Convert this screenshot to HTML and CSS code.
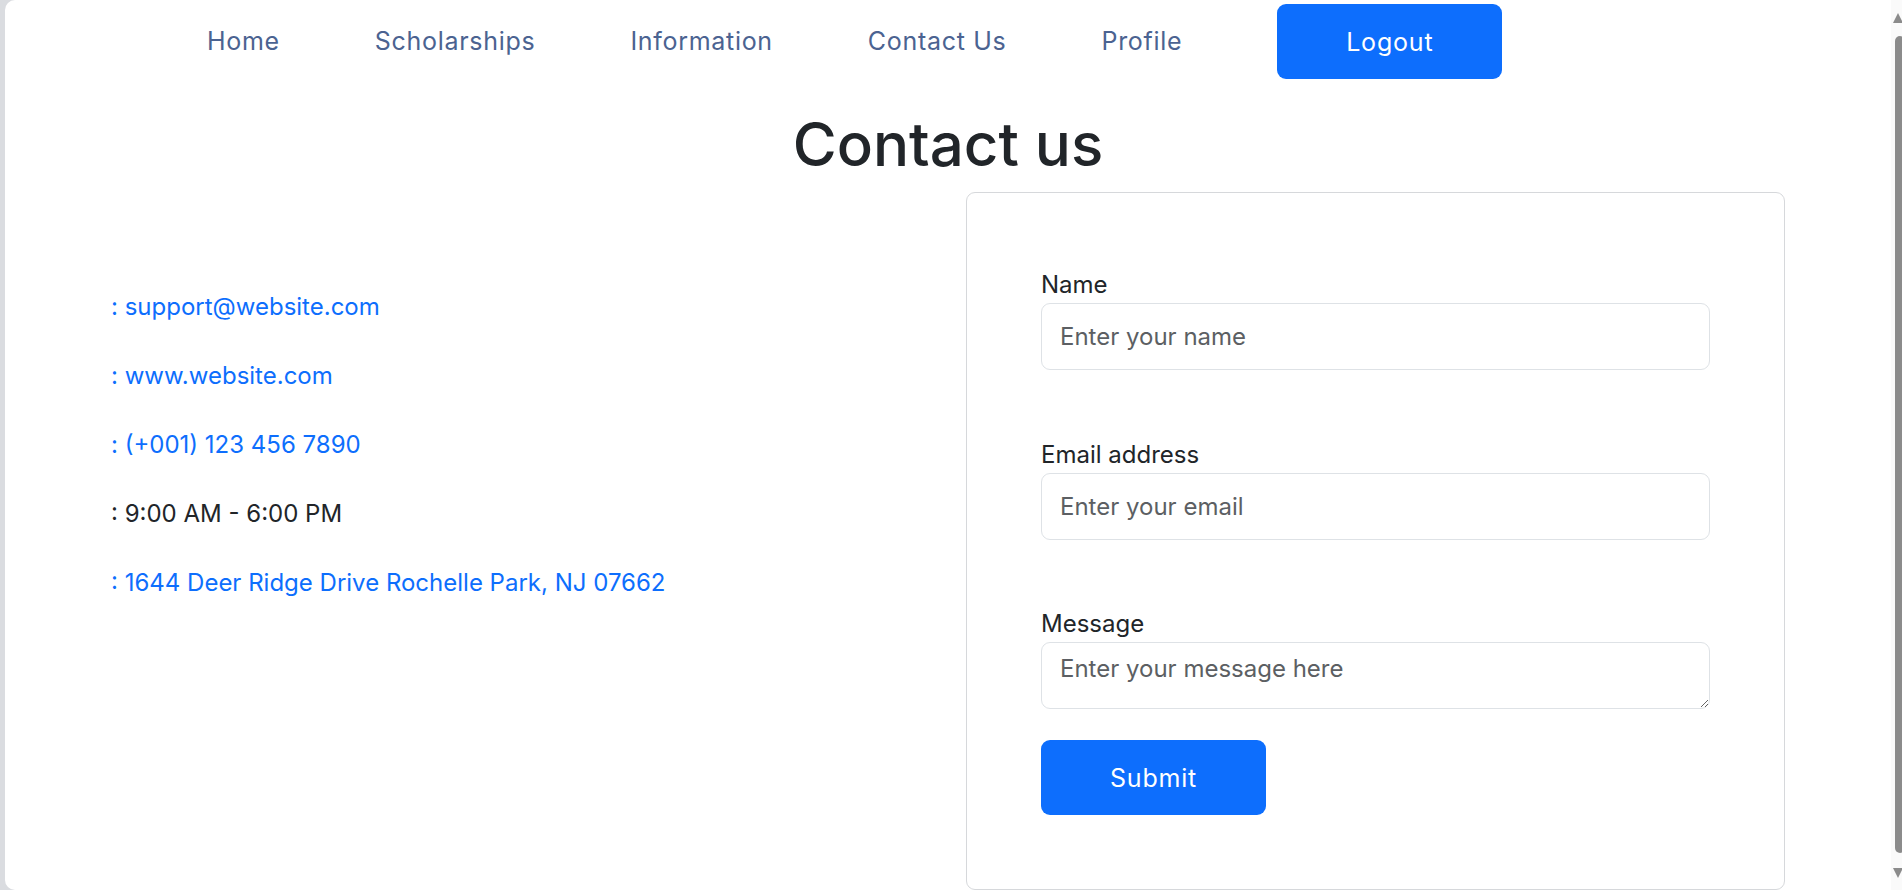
FILE: index.html
```html
<!DOCTYPE html>
<html lang="en">
<head>
<meta charset="utf-8">
<title>Contact us</title>
<link rel="stylesheet" href="styles.css">
</head>
<body>
<div class="window">
  <div class="page">
    <nav class="topnav">
      <ul class="nav-links">
        <li><a href="#">Home</a></li>
        <li><a href="#">Scholarships</a></li>
        <li><a href="#">Information</a></li>
        <li><a href="#">Contact Us</a></li>
        <li><a href="#">Profile</a></li>
      </ul>
      <a class="btn btn-logout" href="#">Logout</a>
    </nav>

    <h1 class="title">Contact us</h1>

    <div class="container">
      <div class="col info">
        <p><a href="#">: support@website.com</a></p>
        <p><a href="#">: www.website.com</a></p>
        <p><a href="#">: (+001) 123 456 7890</a></p>
        <p class="plain">: 9:00 AM - 6:00 PM</p>
        <p><a href="#">: 1644 Deer Ridge Drive Rochelle Park, NJ 07662</a></p>
      </div>
      <div class="col">
        <div class="card">
          <form class="form">
            <div class="field">
              <label for="name">Name</label>
              <input id="name" type="text" placeholder="Enter your name">
            </div>
            <div class="field">
              <label for="email">Email address</label>
              <input id="email" type="email" placeholder="Enter your email">
            </div>
            <div class="field field-last">
              <label for="msg">Message</label>
              <textarea id="msg" rows="1" placeholder="Enter your message here"></textarea>
            </div>
            <button type="button" class="btn btn-submit">Submit</button>
          </form>
        </div>
      </div>
    </div>
  </div>
  <div class="scrollbar">
    <span class="arrow arrow-up"></span>
    <span class="thumb"></span>
    <span class="arrow arrow-down"></span>
  </div>
</div>
</body>
</html>
```

FILE: styles.css
```css
* { box-sizing: border-box; }

html, body {
  margin: 0;
  padding: 0;
  height: 890px;
  overflow: hidden;
}

body {
  font-family: Inter, "Noto Sans", "Liberation Sans", sans-serif;
  font-size: 24px;
  line-height: 36px;
  color: #212529;
  background: #dadce0;
}

.window {
  display: flex;
  height: 890px;
  padding-left: 5px;
  background: #dadce0;
}

.page {
  flex: 1;
  background: #ffffff;
  border-radius: 10px 0 0 10px;
  overflow: hidden;
}

/* ---------- nav ---------- */
.topnav {
  display: flex;
  align-items: center;
  padding: 4px 0 0 202px;
  height: 79px;
}

.nav-links {
  display: flex;
  align-items: center;
  gap: 95px;
  list-style: none;
  margin: 0 95px 0 0;
  padding: 0;
}

.nav-links a {
  color: #4b6391;
  text-decoration: none;
  font-size: 25px;
  letter-spacing: 0.7px;
}

.btn {
  display: flex;
  align-items: center;
  justify-content: center;
  width: 225px;
  height: 75px;
  background: #0d6efd;
  color: #ffffff;
  border: none;
  border-radius: 9px;
  text-decoration: none;
  font-family: inherit;
  font-size: 25px;
  letter-spacing: 0.8px;
}

/* ---------- heading ---------- */
.title {
  margin: 29px 0 12px;
  text-align: center;
  font-size: 60px;
  line-height: 72px;
  font-weight: 500;
  color: #212529;
}

/* ---------- content ---------- */
.container {
  display: flex;
  width: 1710px;
  margin: 0 auto;
}

.col {
  flex: 1;
  padding: 0 18px;
}

.info {
  padding-top: 97px;
}

.info p {
  margin: 0 0 33px;
  line-height: 36px;
}

.info a {
  color: #0d6efd;
  text-decoration: none;
}

.info .plain {
  color: #212529;
}

.card {
  border: 1px solid #d6d8db;
  border-radius: 9px;
  padding: 74px;
}

.form {
  display: flex;
  flex-direction: column;
}

.field {
  display: flex;
  flex-direction: column;
  margin-bottom: 66.5px;
}

.field-last {
  margin-bottom: 31px;
}

.field label {
  line-height: 36px;
}

.field input,
.field textarea {
  width: 100%;
  height: 67px;
  border: 1px solid #dee2e6;
  border-radius: 9px;
  padding: 14px 18px;
  font-family: inherit;
  font-size: 24px;
  line-height: 36px;
  color: #212529;
  background: #fff;
  outline: none;
}

.field textarea {
  padding-top: 8px;
  padding-bottom: 8px;
  resize: vertical;
}

.field input::placeholder,
.field textarea::placeholder {
  color: #5c5f63;
}

/* ---------- fake scrollbar ---------- */
.scrollbar {
  width: 11px;
  background: #fafafa;
  display: flex;
  flex-direction: column;
  overflow: hidden;
}

.arrow {
  display: block;
  width: 0;
  height: 0;
  margin-left: 2px;
  border-left: 5px solid transparent;
  border-right: 5px solid transparent;
}

.arrow-up {
  margin-top: 13px;
  border-bottom: 10px solid #8b8b8b;
}

.thumb {
  display: block;
  width: 10px;
  height: 817px;
  margin: 13px 0 15px 4px;
  background: #8b8b8b;
  border-radius: 5px;
}

.arrow-down {
  border-top: 10px solid #8b8b8b;
}
```
